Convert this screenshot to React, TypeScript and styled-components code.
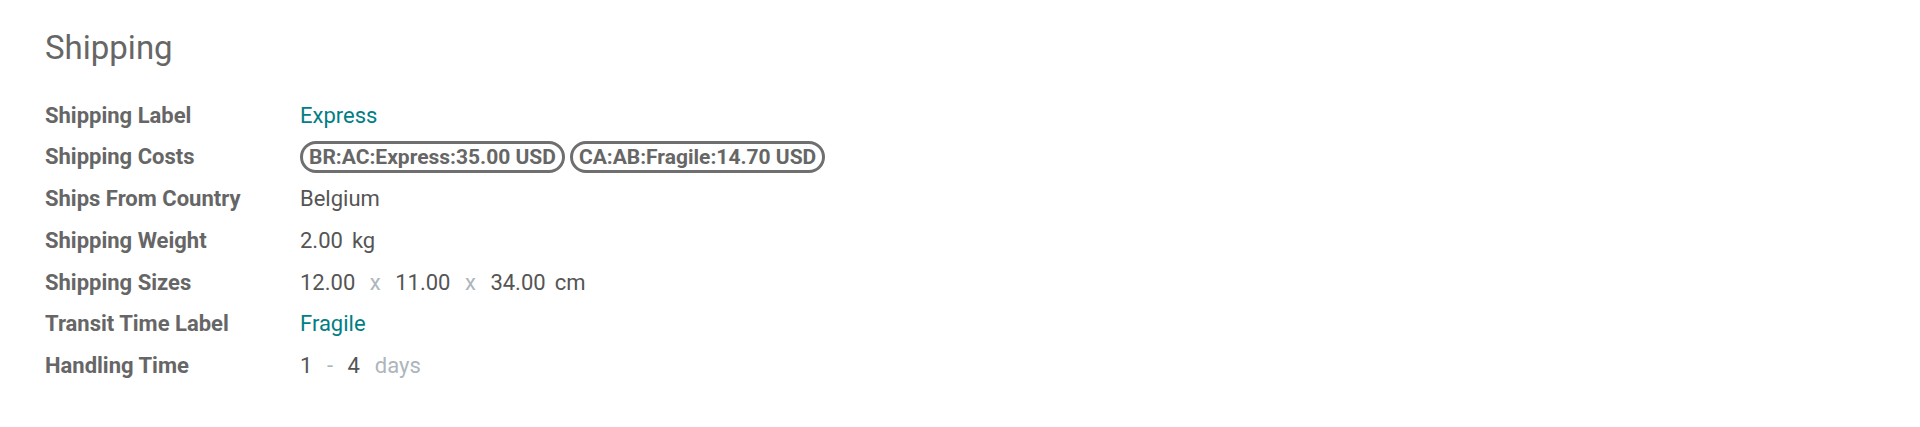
import React from 'react';
import styled, { createGlobalStyle } from 'styled-components';

const GlobalStyle = createGlobalStyle`
  html, body {
    margin: 0;
    padding: 0;
    background: #ffffff;
  }

  body {
    font-family: Roboto, "Noto Sans", "Liberation Sans", sans-serif;
    color: #4c4c4c;
  }
`;

interface Cost {
  key: string;
  text: string;
}

const costs: Cost[] = [
  { key: 'br', text: 'BR:AC:Express:35.00 USD' },
  { key: 'ca', text: 'CA:AB:Fragile:14.70 USD' }
];

const Page = styled.div`
  padding: 29px 45px 0;
  width: 100%;
  box-sizing: border-box;
`;

const SectionTitle = styled.h2`
  margin: 0 0 28px;
  font-size: 33px;
  font-weight: 400;
  line-height: 37.8px;
  color: #666666;
`;

const FieldTable = styled.div`
  display: grid;
  grid-template-columns: 255px 1fr;
  grid-auto-rows: 41.7px;
  align-items: center;
`;

const FieldLabel = styled.div`
  font-size: 22px;
  font-weight: 700;
  line-height: 41.7px;
  color: #666666;
  white-space: nowrap;
`;

const FieldValue = styled.div<{ $link?: boolean }>`
  display: flex;
  align-items: center;
  gap: 9px;
  font-size: 22px;
  line-height: 41.7px;
  color: ${({ $link }) => ($link ? '#017e84' : '#555555')};
`;

const Muted = styled.span`
  margin: 0 5.5px;
  color: #adb5bd;
`;

const Unit = styled.span`
  color: #adb5bd;
  margin-left: 6px;
`;

const Tags = styled.div`
  display: flex;
  align-items: center;
  gap: 5px;
`;

const Tag = styled.span`
  display: inline-flex;
  align-items: center;
  height: 32px;
  box-sizing: border-box;
  padding: 0 6px;
  border: 3px solid #6f6f6f;
  border-radius: 16px;
  font-size: 21px;
  font-weight: 700;
  color: #666666;
  white-space: nowrap;
`;

function Field ({ label, children }: { label: string; children: React.ReactNode }): React.ReactElement {
  return (
    <>
      <FieldLabel>{label}</FieldLabel>
      {children}
    </>
  );
}

export default function App (): React.ReactElement {
  return (
    <Page>
      <GlobalStyle />
      <SectionTitle>Shipping</SectionTitle>
      <FieldTable>
        <Field label='Shipping Label'>
          <FieldValue $link>Express</FieldValue>
        </Field>
        <Field label='Shipping Costs'>
          <Tags>
            {costs.map((c) => <Tag key={c.key}>{c.text}</Tag>)}
          </Tags>
        </Field>
        <Field label='Ships From Country'>
          <FieldValue>Belgium</FieldValue>
        </Field>
        <Field label='Shipping Weight'>
          <FieldValue>
            <span>2.00</span>
            <span>kg</span>
          </FieldValue>
        </Field>
        <Field label='Shipping Sizes'>
          <FieldValue>
            <span>12.00</span>
            <Muted>x</Muted>
            <span>11.00</span>
            <Muted>x</Muted>
            <span>34.00</span>
            <span>cm</span>
          </FieldValue>
        </Field>
        <Field label='Transit Time Label'>
          <FieldValue $link>Fragile</FieldValue>
        </Field>
        <Field label='Handling Time'>
          <FieldValue>
            <span>1</span>
            <Muted>-</Muted>
            <span>4</span>
            <Unit>days</Unit>
          </FieldValue>
        </Field>
      </FieldTable>
    </Page>
  );
}
